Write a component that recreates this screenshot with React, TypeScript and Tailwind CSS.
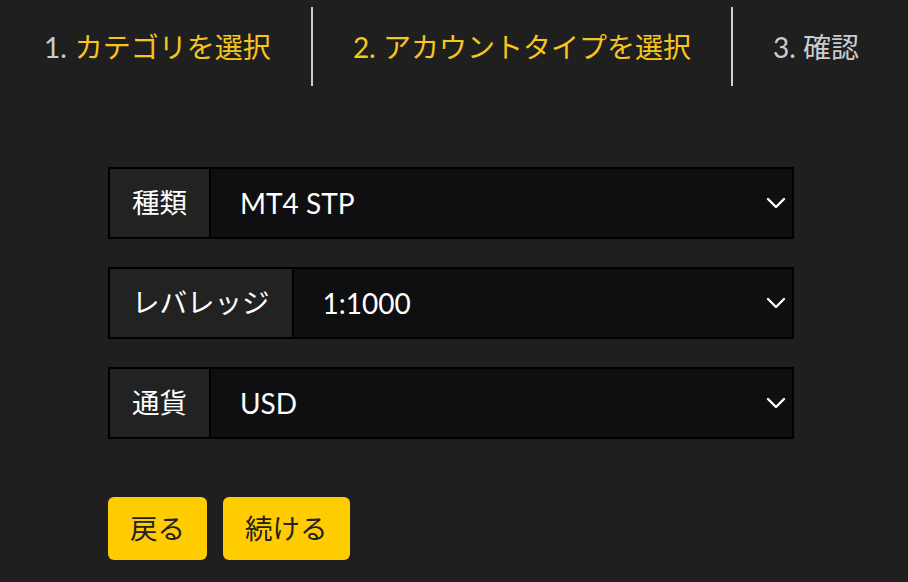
const font = { fontFamily: '"Lato", "Noto Sans CJK JP", sans-serif' };

const Chevron = () => (
  <svg width="20" height="12" viewBox="0 0 20 12" fill="none" className="shrink-0">
    <polyline points="2,2 10,10 18,2" stroke="#fff" strokeWidth="2.4" strokeLinecap="round" strokeLinejoin="round" />
  </svg>
);

interface RowProps {
  label: string;
  value: string;
}

const SelectRow = ({ label, value }: RowProps) => (
  <div className="flex h-[72px] border-2 border-black">
    <div className="flex items-center border-r-2 border-black bg-[#222222] px-[22px] text-white">
      {label}
    </div>
    <div className="flex flex-1 items-center justify-between bg-[#0f0f12] pl-[29px] pr-[6px] text-[28px] text-white">
      <span>{value}</span>
      <Chevron />
    </div>
  </div>
);

export default function App() {
  return (
    <div
      className="h-[582px] w-[908px] overflow-hidden bg-[#1f1f1f] text-[27.5px] leading-none"
      style={font}
    >
      <div className="flex h-[93px] items-start whitespace-nowrap text-[28px]">
        <div className="flex h-[86px] shrink-0 items-center pl-[44px] pr-[40px] pt-[7px]">
          <span className="text-[#c9ccd1]">1.</span>
          <span className="ml-[8px] text-[#f8c51c]">カテゴリを選択</span>
        </div>
        <div className="mt-[7px] h-[79px] w-[2px] shrink-0 bg-[#d0d0d0]" />
        <div className="flex h-[86px] shrink-0 items-center px-[40px] pt-[7px] text-[#f8c51c]">
          2. アカウントタイプを選択
        </div>
        <div className="mt-[7px] h-[79px] w-[2px] shrink-0 bg-[#d0d0d0]" />
        <div className="flex h-[86px] shrink-0 items-center px-[40px] pt-[7px] text-[#c9ccd1]">
          3. 確認
        </div>
      </div>

      <div className="ml-[108px] mt-[74px] flex w-[686px] flex-col gap-[28px]">
        <SelectRow label="種類" value="MT4 STP" />
        <SelectRow label="レバレッジ" value="1:1000" />
        <SelectRow label="通貨" value="USD" />
      </div>

      <div className="ml-[108px] mt-[58px] flex gap-[16px]">
        <button className="h-[63px] rounded-[6px] bg-[#ffcc00] px-[22px] text-[#222]">戻る</button>
        <button className="h-[63px] rounded-[6px] bg-[#ffcc00] px-[22px] text-[#222]">続ける</button>
      </div>
    </div>
  );
}
